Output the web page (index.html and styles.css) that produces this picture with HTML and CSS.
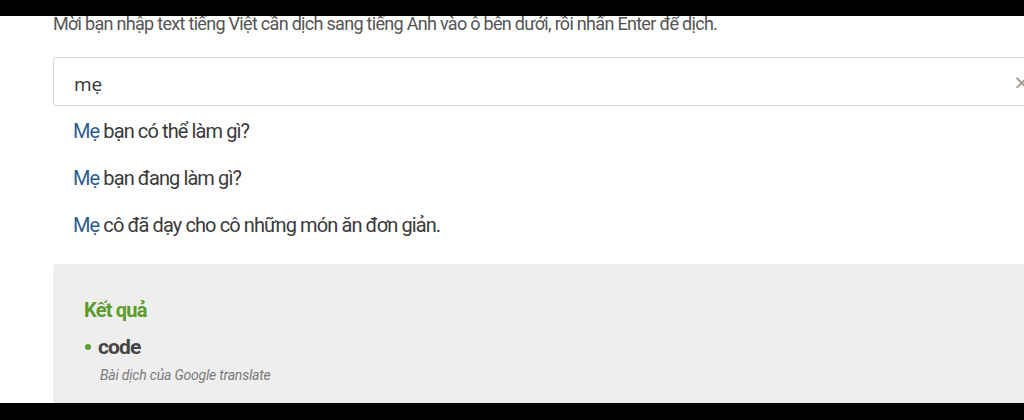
FILE: index.html
```html
<!DOCTYPE html>
<html lang="vi">
<head>
  <meta charset="UTF-8" />
  <title>Dịch tiếng Việt sang tiếng Anh</title>
  <link rel="stylesheet" href="styles.css">
</head>
<body>

<div class="frame-bar"></div>

<div class="content">
  <p class="intro">Mời bạn nhập text tiếng Việt cần dịch sang tiếng Anh vào ô bên dưới, rồi nhấn Enter để dịch.</p>

  <div class="search-box">
    <span class="search-text">mẹ</span>
    <span class="clear-btn">×</span>
  </div>

  <ul class="suggestions">
    <li><span class="match">Mẹ</span> bạn có thể làm gì?</li>
    <li><span class="match">Mẹ</span> bạn đang làm gì?</li>
    <li><span class="match">Mẹ</span> cô đã dạy cho cô những món ăn đơn giản.</li>
  </ul>

  <div class="result">
    <h3>Kết quả</h3>
    <ul class="result-list">
      <li>
        <span class="word">code</span>
        <span class="source">Bài dịch của Google translate</span>
      </li>
    </ul>
  </div>
</div>

<div class="frame-bar bottom"></div>

</body>
</html>
```

FILE: styles.css
```css
html, body {
  margin: 0;
  height: 420px;
  overflow: hidden;
}

body {
  font-family: Roboto, 'Noto Sans', sans-serif;
  background: #fff;
  color: #333;
  display: flex;
  flex-direction: column;
}

.frame-bar {
  height: 16px;
  background: #000;
  flex: none;
  position: relative;
  z-index: 1;
}

.frame-bar.bottom {
  height: 17px;
}

.content {
  flex: 1;
  min-height: 0;
  padding-left: 53px;
  width: 1010px;
  display: flex;
  flex-direction: column;
}

.intro {
  margin: -3px 0 0;
  font-size: 18px;
  line-height: 22px;
  letter-spacing: -0.7px;
  color: #555;
  height: 44px;
}

.search-box {
  flex: none;
  height: 47px;
  border: 1px solid #d6d6d6;
  border-radius: 3px;
  display: flex;
  align-items: center;
  justify-content: space-between;
  padding: 0 0 0 20px;
  font-family: 'Open Sans', sans-serif;
}

.search-text {
  font-size: 19px;
  color: #333;
  padding-top: 4px;
}

.clear-btn {
  font-size: 26px;
  color: #999;
  margin-right: 33px;
}

.suggestions {
  flex: none;
  list-style: none;
  margin: 0;
  padding: 2px 0 0 20px;
  height: 156px;
}

.suggestions li {
  height: 47px;
  line-height: 47px;
  font-size: 20px;
  letter-spacing: -0.9px;
  color: #3a3a3a;
}

.match {
  color: #2b5d8c;
}

.result {
  flex: 1;
  background: #efeeee;
  border-top: 1px solid #ebebeb;
  border-radius: 4px 0 0 0;
  padding: 30px 0 0 31px;
}

.result h3 {
  margin: 0;
  font-size: 20px;
  line-height: 30px;
  letter-spacing: -0.8px;
  color: #5b9c2b;
  font-weight: 700;
}

.result-list {
  list-style: none;
  margin: 8px 0 0;
  padding: 0;
}

.result-list li {
  position: relative;
  padding-left: 14px;
  display: flex;
  flex-direction: column;
}

.result-list li::before {
  content: "";
  position: absolute;
  left: 1px;
  top: 11px;
  width: 6px;
  height: 6px;
  border-radius: 50%;
  background: #5b9c2b;
}

.word {
  font-size: 21px;
  line-height: 28px;
  font-weight: 700;
  letter-spacing: -0.9px;
  color: #444;
}

.source {
  font-size: 14px;
  line-height: 24px;
  font-style: italic;
  letter-spacing: -0.2px;
  color: #7a7a7a;
  margin: 2px 0 0 2px;
}
```
